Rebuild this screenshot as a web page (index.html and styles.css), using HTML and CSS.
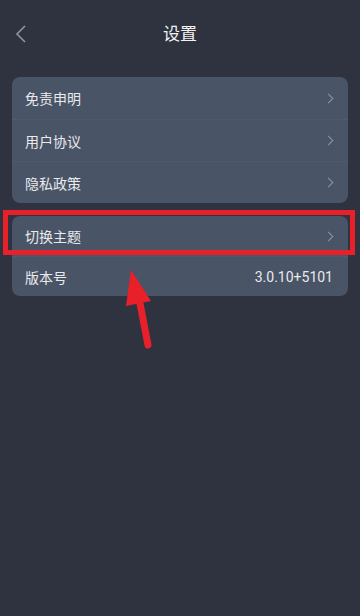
FILE: index.html
```html
<!DOCTYPE html>
<html lang="zh-CN">

<head>
    <meta charset="UTF-8">
    <meta name="viewport" content="width=device-width, initial-scale=1.0">
    <title>设置</title>
    <link rel="stylesheet" href="styles.css">
</head>

<body>
    <div class="page">
        <div class="header">
            <span class="back">
                <svg width="12" height="18" viewBox="0 0 12 18">
                    <polyline points="10,1 2,9 10,17" fill="none" stroke="#8e95a2" stroke-width="1.6" />
                </svg>
            </span>
            <h2>设置</h2>
        </div>

        <div class="group">
            <div class="row">
                <span>免责申明</span>
                <span class="arrow"></span>
            </div>
            <div class="row">
                <span>用户协议</span>
                <span class="arrow"></span>
            </div>
            <div class="row">
                <span>隐私政策</span>
                <span class="arrow"></span>
            </div>
        </div>

        <div class="group">
            <div class="row">
                <span>切换主题</span>
                <span class="arrow"></span>
            </div>
            <div class="row">
                <span>版本号</span>
                <span class="value">3.0.10+5101</span>
            </div>
        </div>

        <!-- annotation overlay -->
        <div class="mark"></div>
        <svg class="pointer" width="360" height="616" viewBox="0 0 360 616">
            <line x1="148" y1="345" x2="139" y2="298" stroke="#e8202a" stroke-width="7" stroke-linecap="round" />
            <polygon points="131,270 126,306 151,301" fill="#e8202a" />
        </svg>
    </div>
</body>

</html>
```

FILE: styles.css
```css
* {
    margin: 0;
    padding: 0;
    box-sizing: border-box;
}

body {
    font-family: "Noto Sans CJK SC", "Noto Sans", Roboto, sans-serif;
    background-color: #2e333f;
    color: #e9eaec;
}

.page {
    position: relative;
    width: 360px;
    height: 616px;
    padding: 0 12px;
}

.header {
    position: relative;
    height: 66px;
    display: flex;
    align-items: center;
    justify-content: center;
}

.header h2 {
    font-size: 17px;
    font-weight: normal;
    color: #f2f2f2;
    margin-bottom: 1px;
}

.back {
    position: absolute;
    left: 3px;
    top: 24px;
}

.group {
    background-color: #4a5467;
    border-radius: 8px;
    margin-top: 11px;
    margin-bottom: 13px;
    overflow: hidden;
}

.group:first-of-type {
    margin-top: 11px;
}

.row {
    height: 42px;
    display: flex;
    align-items: center;
    justify-content: space-between;
    padding: 0 15px 0 13px;
    font-size: 14px;
    border-top: 1px solid #4f596c;
}

.row:first-child {
    border-top: none;
}

.group + .group .row {
    height: 40px;
}

.arrow {
    width: 7px;
    height: 7px;
    border-top: 1.3px solid #8e95a2;
    border-right: 1.3px solid #8e95a2;
    transform: rotate(45deg);
    margin-right: 1px;
}

.value {
    font-family: Roboto, "Noto Sans", sans-serif;
    font-size: 14px;
    color: #e9eaec;
}

.mark {
    position: absolute;
    left: 3px;
    top: 210px;
    width: 352px;
    height: 45px;
    border: 5px solid #e8202a;
}

.pointer {
    position: absolute;
    left: 0;
    top: 0;
}
```
